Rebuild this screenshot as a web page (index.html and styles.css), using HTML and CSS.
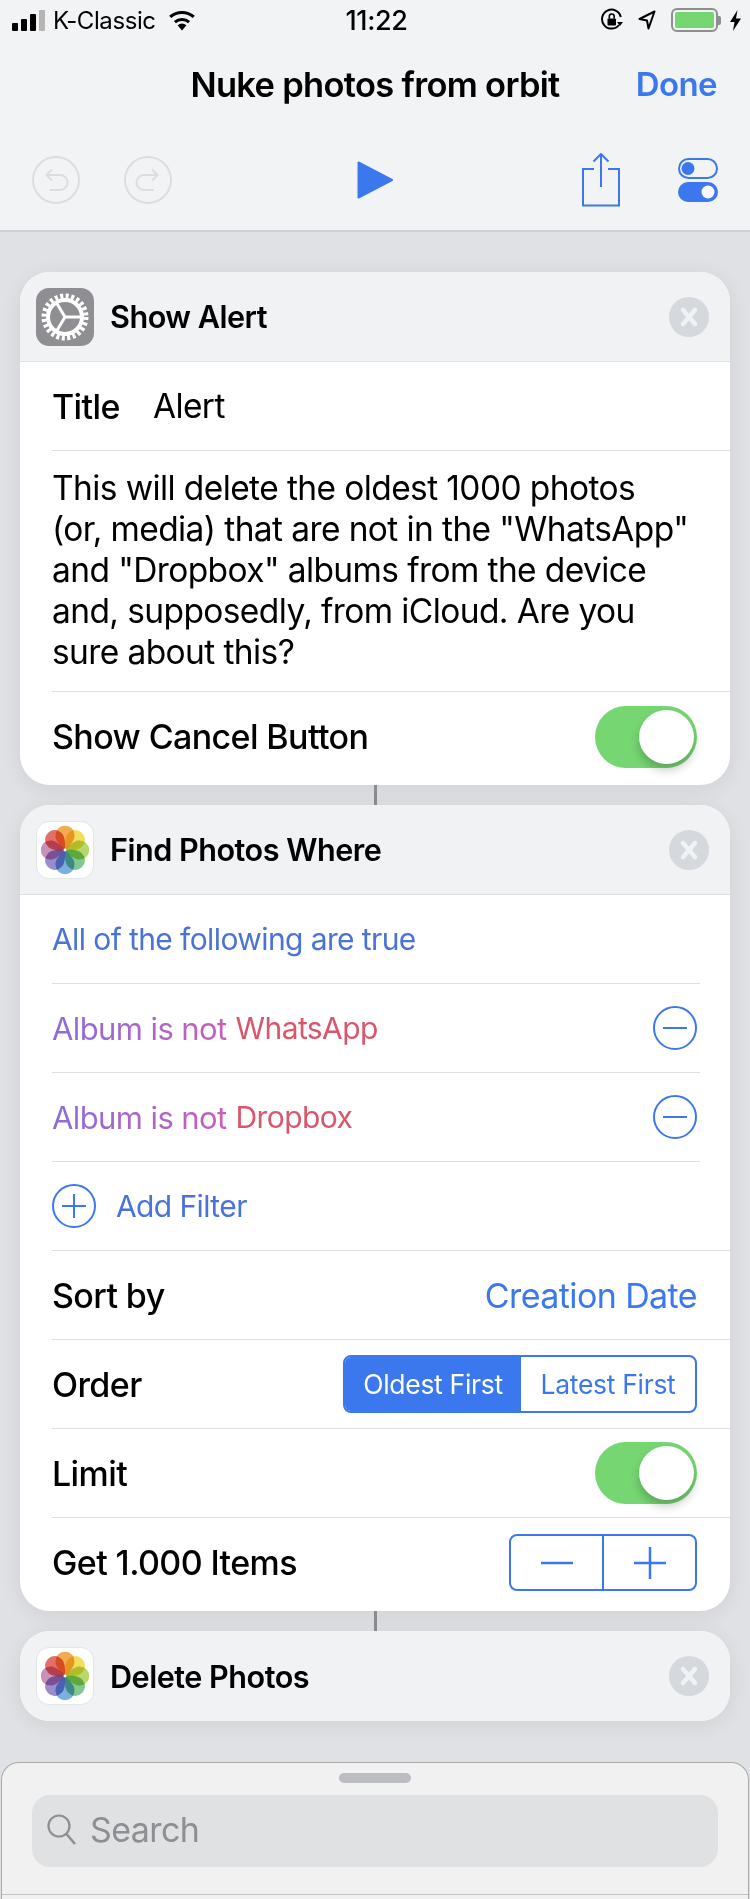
FILE: index.html
```html
<!DOCTYPE html>
<html lang="en">
<head>
    <meta charset="UTF-8" />
    <meta name="viewport" content="width=device-width, initial-scale=1.0" />
    <title>Nuke photos from orbit</title>
    <link rel="stylesheet" href="styles.css">
</head>
<body>

    <svg class="defs" width="0" height="0">
        <symbol id="photos" viewBox="-28 -28 56 56">
            <g class="petals">
                <path fill="#f0a443" d="M0 0C-9 -8 -11 -13 -10 -17A10 9 0 0 1 10 -17C11 -13 9 -8 0 0Z"/>
                <path fill="#f3dc52" transform="rotate(45)" d="M0 0C-9 -8 -11 -13 -10 -17A10 9 0 0 1 10 -17C11 -13 9 -8 0 0Z"/>
                <path fill="#b4d55c" transform="rotate(90)" d="M0 0C-9 -8 -11 -13 -10 -17A10 9 0 0 1 10 -17C11 -13 9 -8 0 0Z"/>
                <path fill="#76c38c" transform="rotate(135)" d="M0 0C-9 -8 -11 -13 -10 -17A10 9 0 0 1 10 -17C11 -13 9 -8 0 0Z"/>
                <path fill="#6fa9dd" transform="rotate(180)" d="M0 0C-9 -8 -11 -13 -10 -17A10 9 0 0 1 10 -17C11 -13 9 -8 0 0Z"/>
                <path fill="#9083c8" transform="rotate(225)" d="M0 0C-9 -8 -11 -13 -10 -17A10 9 0 0 1 10 -17C11 -13 9 -8 0 0Z"/>
                <path fill="#c586b4" transform="rotate(270)" d="M0 0C-9 -8 -11 -13 -10 -17A10 9 0 0 1 10 -17C11 -13 9 -8 0 0Z"/>
                <path fill="#e2625c" transform="rotate(315)" d="M0 0C-9 -8 -11 -13 -10 -17A10 9 0 0 1 10 -17C11 -13 9 -8 0 0Z"/>
            </g>
            <circle r="1.6" fill="#fff"/>
        </symbol>
        <symbol id="close" viewBox="0 0 40 40">
            <path d="M14 13L26 27M26 13L14 27" stroke="#f1f2f4" stroke-width="4.5" stroke-linecap="round" fill="none"/>
        </symbol>
        <symbol id="minus-circle" viewBox="0 0 44 44">
            <circle cx="22" cy="22" r="21" fill="none" stroke="#3b78ee" stroke-width="2"/>
            <path d="M10 22H34" stroke="#3b78ee" stroke-width="2" fill="none"/>
        </symbol>
    </svg>

    <header class="top">
        <div class="status">
            <div class="status-left">
                <span class="signal"><i></i><i></i><i></i><i></i></span>
                <span>K-Classic</span>
                <svg class="wifi" width="28" height="21" viewBox="0 0 28 21">
                    <path d="M14 20.5L9.6 15.3A7 7 0 0 1 18.4 15.3Z" fill="#000"/>
                    <path d="M6.9 12.1A11 11 0 0 1 21.1 12.1" stroke="#000" stroke-width="3.2" fill="none"/>
                    <path d="M2.2 6.9A18 18 0 0 1 25.8 6.9" stroke="#000" stroke-width="3.2" fill="none"/>
                </svg>
            </div>
            <span class="time">11:22</span>
            <div class="status-right">
                <svg width="22" height="24" viewBox="0 0 22 24">
                    <path d="M18 17A9.5 9.5 0 1 1 19.8 9" stroke="#000" stroke-width="2" fill="none"/>
                    <path d="M16 14H22L19 18Z" fill="#000"/>
                    <rect x="6.5" y="10.5" width="8.5" height="7" rx="1" fill="#000"/>
                    <path d="M8.3 10.5V8.5A2.4 2.4 0 0 1 13.2 8.5V10.5" stroke="#000" stroke-width="1.6" fill="none"/>
                </svg>
                <svg class="arrow" width="18" height="20" viewBox="0 0 18 20">
                    <path d="M16.5 1.5L1.5 9L9 10.5L10.5 18.5Z" stroke="#000" stroke-width="2" stroke-linejoin="round" fill="none"/>
                </svg>
                <div class="battery"><span class="battery-fill"></span></div>
                <span class="battery-nub"></span>
                <svg class="bolt" width="11" height="21" viewBox="0 0 11 21">
                    <path d="M7.5 0L0 12H4.5L3 21L11 8.5H6Z" fill="#000"/>
                </svg>
            </div>
        </div>

        <div class="nav">
            <span></span>
            <h1>Nuke photos from orbit</h1>
            <a class="done">Done</a>
        </div>

        <div class="toolbar">
            <div class="tool-group">
                <svg width="48" height="48" viewBox="0 0 48 48">
                    <circle cx="24" cy="24" r="23" fill="none" stroke="#dcdddf" stroke-width="2"/>
                    <path d="M15 19H28A7.5 7.5 0 0 1 28 34H18M20 13.5L14.5 19L20 24.5" fill="none" stroke="#dcdddf" stroke-width="2"/>
                </svg>
                <svg width="48" height="48" viewBox="0 0 48 48">
                    <circle cx="24" cy="24" r="23" fill="none" stroke="#dcdddf" stroke-width="2"/>
                    <path d="M33 19H20A7.5 7.5 0 0 0 20 34H30M28 13.5L33.5 19L28 24.5" fill="none" stroke="#dcdddf" stroke-width="2"/>
                </svg>
            </div>
            <svg class="play" width="36" height="38" viewBox="0 0 36 38">
                <path d="M1.5 1.5L35 19L1.5 36.5Z" fill="#3b78ee" stroke="#3b78ee" stroke-width="2" stroke-linejoin="round"/>
            </svg>
            <div class="tool-group tool-right">
                <svg width="38" height="54" viewBox="0 0 38 54">
                    <path d="M12 16H1V52.500H37V16H26" fill="none" stroke="#3b78ee" stroke-width="2"/>
                    <path d="M19 1V34M11.500 8.500L19 1L26.500 8.500" fill="none" stroke="#3b78ee" stroke-width="2"/>
                </svg>
                <svg width="40" height="44" viewBox="0 0 40 44">
                    <rect x="1" y="1" width="38" height="19" rx="9.5" fill="none" stroke="#3b78ee" stroke-width="2"/>
                    <circle cx="10" cy="10.500" r="6.500" fill="#3b78ee"/>
                    <rect y="24" width="40" height="20" rx="10" fill="#3b78ee"/>
                    <circle cx="30" cy="34" r="6.500" fill="#fff"/>
                </svg>
            </div>
        </div>
    </header>

    <main class="flow">
        <section class="card">
            <div class="card-head">
                <div class="tile tile-gray">
                    <svg width="50" height="50" viewBox="-25 -25 50 50">
                        <circle r="20.500" fill="none" stroke="#fff" stroke-width="6" stroke-dasharray="3 2.367"/>
                        <circle r="17" fill="none" stroke="#fff" stroke-width="4"/>
                        <path d="M0 0L-9 -15M0 0H17M0 0L-9 15" stroke="#fff" stroke-width="3" fill="none"/>
                    </svg>
                </div>
                <h2>Show Alert</h2>
                <svg class="close" width="40" height="40"><use href="#close"/></svg>
            </div>
            <div class="row">
                <span class="label">Title</span>
                <span class="title-value">Alert</span>
            </div>
            <div class="row row-text">
                <p>This will delete the oldest 1000 photos<br>(or, media) that are not in the "WhatsApp"<br>and "Dropbox" albums from the device<br>and, supposedly, from iCloud. Are you<br>sure about this?</p>
            </div>
            <div class="row row-last">
                <span class="label">Show Cancel Button</span>
                <span class="switch"><span class="knob"></span></span>
            </div>
        </section>

        <div class="link"></div>

        <section class="card">
            <div class="card-head">
                <div class="tile tile-photos">
                    <svg width="52" height="52"><use href="#photos"/></svg>
                </div>
                <h2>Find Photos Where</h2>
                <svg class="close" width="40" height="40"><use href="#close"/></svg>
            </div>
            <div class="row row-filter">
                <span class="match">All of the following are true</span>
            </div>
            <div class="row row-filter">
                <span class="condition"><span class="album">Album is not</span><span class="value">WhatsApp</span></span>
                <svg class="remove" width="44" height="44"><use href="#minus-circle"/></svg>
            </div>
            <div class="row row-filter">
                <span class="condition"><span class="album">Album is not</span><span class="value">Dropbox</span></span>
                <svg class="remove" width="44" height="44"><use href="#minus-circle"/></svg>
            </div>
            <div class="row row-add row-filter">
                <svg width="44" height="44" viewBox="0 0 44 44">
                    <circle cx="22" cy="22" r="21" fill="none" stroke="#3b78ee" stroke-width="2"/>
                    <path d="M10 22H34M22 10V34" stroke="#3b78ee" stroke-width="2" fill="none"/>
                </svg>
                <span class="match">Add Filter</span>
            </div>
            <div class="row">
                <span class="label">Sort by</span>
                <span class="link-value">Creation Date</span>
            </div>
            <div class="row">
                <span class="label">Order</span>
                <div class="segment">
                    <span class="seg seg-on">Oldest First</span>
                    <span class="seg seg-off">Latest First</span>
                </div>
            </div>
            <div class="row">
                <span class="label">Limit</span>
                <span class="switch"><span class="knob"></span></span>
            </div>
            <div class="row row-last">
                <span class="label">Get 1.000 Items</span>
                <div class="stepper">
                    <span class="step">
                        <svg width="32" height="32" viewBox="0 0 32 32"><path d="M0 16H32" stroke="#3b78ee" stroke-width="2.500"/></svg>
                    </span>
                    <span class="step step-plus">
                        <svg width="32" height="32" viewBox="0 0 32 32"><path d="M0 16H32M16 0V32" stroke="#3b78ee" stroke-width="2.500"/></svg>
                    </span>
                </div>
            </div>
        </section>

        <div class="link"></div>

        <section class="card card-single">
            <div class="card-head">
                <div class="tile tile-photos">
                    <svg width="52" height="52"><use href="#photos"/></svg>
                </div>
                <h2>Delete Photos</h2>
                <svg class="close" width="40" height="40"><use href="#close"/></svg>
            </div>
        </section>
    </main>

    <aside class="sheet">
        <div class="handle"></div>
        <div class="search">
            <svg width="30" height="40" viewBox="0 0 30 40">
                <circle cx="12" cy="17" r="10.500" fill="none" stroke="#8e8e93" stroke-width="2.200"/>
                <path d="M19.500 25L28 35" stroke="#8e8e93" stroke-width="2.600" fill="none"/>
            </svg>
            <span>Search</span>
        </div>
        <div class="sheet-line"></div>
    </aside>

</body>
</html>
```

FILE: styles.css
```css
html, body {
    margin: 0;
    padding: 0;
}

body {
    width: 750px;
    height: 1899px;
    overflow: hidden;
    background: #dfe1e4;
    color: #000;
    font-family: Inter, 'Liberation Sans', sans-serif;
    font-size: 33.5px;
    letter-spacing: -0.6px;
}

.defs {
    position: absolute;
}

svg {
    display: block;
    flex: none;
}

.top {
    height: 230px;
    background: #f2f3f5;
    border-bottom: 2px solid #cfd0d3;
}

/* status bar */
.status {
    height: 40px;
    display: grid;
    grid-template-columns: 1fr auto 1fr;
    align-items: center;
    padding: 0 9px 0 12px;
    font-size: 24px;
    letter-spacing: -0.4px;
}

.status-left {
    display: flex;
    align-items: center;
    gap: 8px;
}

.signal {
    display: flex;
    align-items: flex-end;
    gap: 3px;
    height: 22px;
}

.signal i {
    display: block;
    width: 6px;
    background: #000;
    border-radius: 1px;
}

.signal i:nth-child(1) { height: 8px; }
.signal i:nth-child(2) { height: 12px; }
.signal i:nth-child(3) { height: 17px; }
.signal i:nth-child(4) { height: 21px; background: #b5b5b5; }

.wifi {
    margin-left: 4px;
}

.time {
    font-weight: 500;
    font-size: 27px;
}

.status-right {
    display: flex;
    align-items: center;
    justify-content: flex-end;
    gap: 15px;
}

.battery {
    width: 47px;
    height: 24px;
    box-sizing: border-box;
    border: 2px solid #8e8e8e;
    border-radius: 6px;
    padding: 2px;
}

.battery-fill {
    display: block;
    height: 100%;
    background: #76d672;
    border-radius: 2px;
}

.battery-nub {
    width: 3px;
    height: 9px;
    background: #8e8e8e;
    margin-left: -15px;
    border-radius: 0 2px 2px 0;
}

.bolt {
    margin-left: -6px;
}

/* nav */
.nav {
    height: 88px;
    display: grid;
    grid-template-columns: 1fr auto 1fr;
    align-items: center;
    padding: 0 33px;
}

h1 {
    margin: 0;
    font-size: 34.5px;
    font-weight: 600;
    letter-spacing: -0.7px;
}

.done {
    text-align: right;
    color: #3b78ee;
    font-size: 33px;
    font-weight: 600;
}

.toolbar {
    height: 102px;
    box-sizing: border-box;
    padding: 2px 32px 0;
    display: grid;
    grid-template-columns: 1fr auto 1fr;
    align-items: center;
}

.tool-group {
    display: flex;
    align-items: center;
    gap: 44px;
}

.tool-right {
    justify-content: flex-end;
    gap: 58px;
}

/* cards */
.flow {
    padding: 40px 20px 0;
}

.card {
    background: #fff;
    border-radius: 30px;
    box-shadow: 0 4px 22px rgba(0, 0, 0, 0.07);
}

.card-head {
    height: 89px;
    background: #f1f2f4;
    border-bottom: 1px solid #dedfe1;
    border-radius: 30px 30px 0 0;
    display: flex;
    align-items: center;
    padding: 0 21px 0 16px;
    gap: 16px;
}

.card-single .card-head {
    height: 90px;
    border-bottom: none;
    border-radius: 30px;
}

h2 {
    flex: 1;
    margin: 0;
    font-size: 30.6px;
    font-weight: 600;
    letter-spacing: -0.5px;
}

.close {
    background: #d5d8dc;
    border-radius: 50%;
}

.tile {
    width: 58px;
    height: 58px;
    box-sizing: border-box;
    border-radius: 13px;
    display: flex;
    align-items: center;
    justify-content: center;
}

.tile-gray {
    background: #8e8e93;
}

.tile-photos {
    background: #fff;
    border: 1px solid #e4e5e7;
}

.petals path {
    mix-blend-mode: multiply;
    opacity: 0.92;
}

.row {
    height: 88px;
    margin-left: 32px;
    padding-right: 33px;
    border-bottom: 1px solid #dedfe1;
    display: flex;
    align-items: center;
    justify-content: space-between;
}

.row-filter {
    margin-right: 30px;
    padding-right: 3px;
    font-size: 30px;
}

.row-text {
    height: 240px;
    align-items: flex-start;
}

.row-text p {
    margin: 17px 0 0;
    line-height: 41px;
    white-space: nowrap;
}

.row-last {
    height: 89px;
    padding-bottom: 4px;
    border-bottom: none;
}

.title-value {
    flex: 1;
    margin-left: 33px;
}

.label {
    font-size: 34px;
    font-weight: 500;
    letter-spacing: -0.6px;
}

.row-add {
    justify-content: flex-start;
    gap: 20px;
    margin-right: 0;
}

.match {
    color: #4a73d8;
}

.condition {
    display: flex;
    gap: 9px;
}

.album {
    font-size: 31px;
    background: linear-gradient(90deg, #8a6cdc, #c95eb8);
    -webkit-background-clip: text;
    background-clip: text;
    color: transparent;
}

.value {
    color: #d9566b;
}

.link-value {
    font-size: 34px;
    color: #3b78ee;
}

/* switch */
.switch {
    width: 102px;
    height: 62px;
    box-sizing: border-box;
    padding: 4px 3px;
    background: #76d672;
    border-radius: 31px;
    display: flex;
    justify-content: flex-end;
}

.knob {
    width: 55px;
    height: 54px;
    background: #fff;
    border-radius: 50%;
    box-shadow: 0 6px 10px rgba(0, 0, 0, 0.22);
}

/* segmented control */
.segment {
    width: 354px;
    height: 58px;
    box-sizing: border-box;
    border: 2px solid #3b78ee;
    border-radius: 8px;
    display: flex;
    font-size: 26.5px;
    letter-spacing: -0.3px;
    overflow: hidden;
}

.seg {
    display: flex;
    align-items: center;
    justify-content: center;
}

.seg-on {
    width: 176px;
    background: #3b78ee;
    color: #fff;
}

.seg-off {
    flex: 1;
    color: #3b78ee;
}

.stepper {
    width: 188px;
    height: 57px;
    box-sizing: border-box;
    border: 2px solid #3b78ee;
    border-radius: 8px;
    display: flex;
}

.step {
    width: 50%;
    display: flex;
    align-items: center;
    justify-content: center;
}

.step-plus {
    border-left: 2px solid #3b78ee;
}

.link {
    width: 3px;
    height: 20px;
    margin: 0 auto;
    background: #8b8c90;
}

/* bottom sheet */
.sheet {
    margin: 41px 1px 0;
    height: 137px;
    box-sizing: border-box;
    background: #f1f1f2;
    border: 1px solid #a9a9ac;
    border-bottom: none;
    border-radius: 18px 18px 0 0;
    padding: 10px 30px 0;
}

.handle {
    width: 72px;
    height: 10px;
    margin: 0 auto 12px;
    background: #bcbdc0;
    border-radius: 5px;
}

.search {
    height: 72px;
    background: #e0e1e3;
    border-radius: 18px;
    display: flex;
    align-items: center;
    gap: 13px;
    padding: 0 15px 4px;
    box-sizing: border-box;
    font-size: 34px;
    color: #8e8e93;
}

.sheet-line {
    height: 1px;
    margin: 27px -30px 0;
    background: #c4c4c6;
}
```
